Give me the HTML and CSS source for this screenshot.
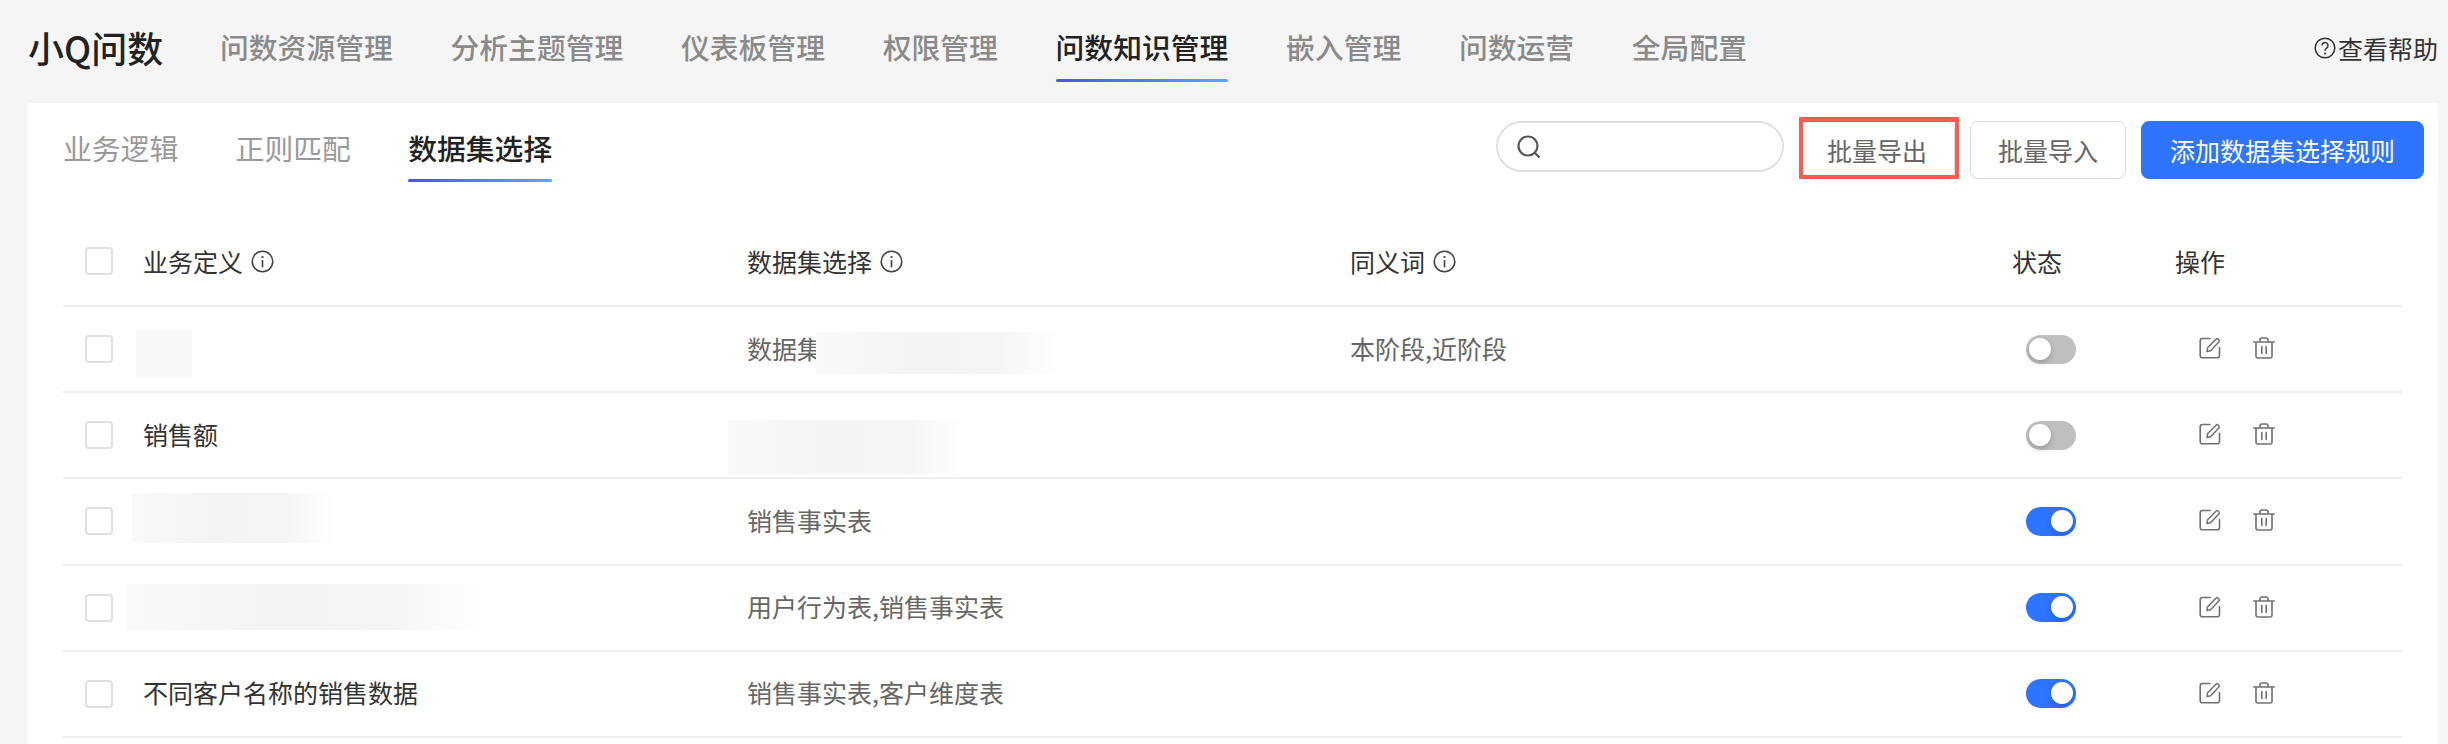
FILE: index.html
```html
<!DOCTYPE html>
<html lang="zh-CN">
<head>
<meta charset="utf-8">
<title>小Q问数</title>
<link rel="stylesheet" href="styles.css">
</head>
<body>
<svg class="defs" width="0" height="0" aria-hidden="true">
  <symbol id="i-info" viewBox="0 0 22 22"><circle cx="11" cy="11" r="9.8" fill="none" stroke="currentColor" stroke-width="1.5"/><circle cx="11" cy="6.8" r="1.1" fill="currentColor"/><path d="M11 9.6v7" fill="none" stroke="currentColor" stroke-width="1.6"/></symbol>
  <symbol id="i-edit" viewBox="0 0 22 22"><path d="M11 1.5H3.5a2.3 2.3 0 0 0-2.3 2.3v14.7a2.3 2.3 0 0 0 2.3 2.3h14.7a2.3 2.3 0 0 0 2.3-2.3V10.5" fill="none" stroke="currentColor" stroke-width="1.6" stroke-linecap="round"/><path d="M8 14.5l.6-3.8L17.2 2c.6-.6 1.2-.6 1.8 0l1 1c.6.6.6 1.200 0 1.800l-8.400 8.900z" fill="none" stroke="currentColor" stroke-width="1.5" stroke-linejoin="round"/></symbol>
  <symbol id="i-trash" viewBox="0 0 22 22"><path d="M.8 5h20.400M7 5V2.800A1.800 1.800 0 0 1 8.800 1h4.400A1.800 1.800 0 0 1 15 2.800V5M3 5v14.200A1.800 1.800 0 0 0 4.800 21h12.400a1.800 1.800 0 0 0 1.800-1.800V5M8.800 9.500v7M13.200 9.500v7" fill="none" stroke="currentColor" stroke-width="1.600" stroke-linecap="round"/></symbol>
</svg>
<header class="topbar">
  <div class="brand">小Q问数</div>
  <nav class="nav">
    <a class="nav-item">问数资源管理</a>
    <a class="nav-item">分析主题管理</a>
    <a class="nav-item">仪表板管理</a>
    <a class="nav-item">权限管理</a>
    <a class="nav-item active">问数知识管理</a>
    <a class="nav-item">嵌入管理</a>
    <a class="nav-item">问数运营</a>
    <a class="nav-item">全局配置</a>
  </nav>
  <a class="help">
    <svg class="help-icon" viewBox="0 0 22 22"><circle cx="11" cy="11" r="9.8" fill="none" stroke="currentColor" stroke-width="1.5"/><path d="M8 8.6a3 3 0 1 1 4.6 2.5c-1 .7-1.6 1.2-1.6 2.6" fill="none" stroke="currentColor" stroke-width="1.5"/><circle cx="11" cy="16.4" r="1" fill="currentColor"/></svg>
    <span>查看帮助</span>
  </a>
</header>
<main class="panel">
  <div class="toolbar">
    <div class="tabs">
      <a class="tab">业务逻辑</a>
      <a class="tab">正则匹配</a>
      <a class="tab active">数据集选择</a>
    </div>
    <div class="actions">
      <div class="search">
        <svg class="search-icon" viewBox="0 0 24 24"><circle cx="11" cy="11" r="9.5" fill="none" stroke="currentColor" stroke-width="2.2"/><path d="M18 18l4.5 4.5" fill="none" stroke="currentColor" stroke-width="2.2"/></svg>
      </div>
      <button class="btn btn-marked">批量导出</button>
      <button class="btn">批量导入</button>
      <button class="btn btn-primary">添加数据集选择规则</button>
    </div>
  </div>
  <div class="table">
    <div class="row head">
      <div class="cell cell-check"><span class="check"></span></div>
      <div class="cell">业务定义<svg class="info"><use href="#i-info"/></svg></div>
      <div class="cell">数据集选择<svg class="info"><use href="#i-info"/></svg></div>
      <div class="cell">同义词<svg class="info"><use href="#i-info"/></svg></div>
      <div class="cell">状态</div>
      <div class="cell">操作</div>
    </div>
    <div class="row">
      <div class="cell cell-check"><span class="check"></span></div>
      <div class="cell name"><span class="mask mask-a"></span></div>
      <div class="cell sub">数据集<span class="mask mask-b"></span></div>
      <div class="cell sub">本阶段,近阶段</div>
      <div class="cell state"><span class="switch"></span></div>
      <div class="cell ops"><svg class="op"><use href="#i-edit"/></svg><svg class="op"><use href="#i-trash"/></svg></div>
    </div>
    <div class="row">
      <div class="cell cell-check"><span class="check"></span></div>
      <div class="cell name">销售额</div>
      <div class="cell sub"><span class="mask mask-c"></span></div>
      <div class="cell sub"></div>
      <div class="cell state"><span class="switch"></span></div>
      <div class="cell ops"><svg class="op"><use href="#i-edit"/></svg><svg class="op"><use href="#i-trash"/></svg></div>
    </div>
    <div class="row">
      <div class="cell cell-check"><span class="check"></span></div>
      <div class="cell name"><span class="mask mask-d"></span></div>
      <div class="cell sub">销售事实表</div>
      <div class="cell sub"></div>
      <div class="cell state"><span class="switch on"></span></div>
      <div class="cell ops"><svg class="op"><use href="#i-edit"/></svg><svg class="op"><use href="#i-trash"/></svg></div>
    </div>
    <div class="row">
      <div class="cell cell-check"><span class="check"></span></div>
      <div class="cell name"><span class="mask mask-e"></span></div>
      <div class="cell sub">用户行为表,销售事实表</div>
      <div class="cell sub"></div>
      <div class="cell state"><span class="switch on"></span></div>
      <div class="cell ops"><svg class="op"><use href="#i-edit"/></svg><svg class="op"><use href="#i-trash"/></svg></div>
    </div>
    <div class="row">
      <div class="cell cell-check"><span class="check"></span></div>
      <div class="cell name">不同客户名称的销售数据</div>
      <div class="cell sub">销售事实表,客户维度表</div>
      <div class="cell sub"></div>
      <div class="cell state"><span class="switch on"></span></div>
      <div class="cell ops"><svg class="op"><use href="#i-edit"/></svg><svg class="op"><use href="#i-trash"/></svg></div>
    </div>
  </div>
</main>
</body>
</html>
```
FILE: styles.css
```css
* { box-sizing: border-box; }
html, body { margin: 0; height: 744px; overflow: hidden; }
body {
  background: #f5f5f5;
  font-family: "Noto Sans CJK SC", "Liberation Sans", sans-serif;
  display: flex;
  flex-direction: column;
}
.defs { position: absolute; }
.topbar {
  height: 103px;
  display: flex;
  align-items: flex-start;
  padding: 0 10px 0 28px;
  flex: none;
}
.brand {
  font-size: 36px;
  font-weight: 500;
  color: #222;
  line-height: 40px;
  margin-top: 27px;
  width: 192px;
  flex: none;
}
.nav { display: flex; gap: 57.7px; flex: 1; }
.nav-item {
  font-size: 28.8px;
  font-weight: 500;
  line-height: 40px;
  padding-top: 27px;
  height: 82px;
  color: #8a8a8a;
  position: relative;
}
.nav-item.active { color: #222; }
.nav-item.active::after,
.tab.active::after {
  content: "";
  position: absolute;
  left: 0;
  right: 0;
  bottom: 0;
  height: 3px;
  border-radius: 2px;
  background: linear-gradient(90deg, #5050f5, #5aa8ff);
}
.help {
  display: flex;
  align-items: center;
  gap: 2px;
  margin-top: 28px;
  height: 40px;
  font-size: 25px;
  color: #333;
}
.help-icon { width: 22px; height: 22px; }
.panel {
  flex: 1;
  margin: 0 10px 0 27px;
  background: #fff;
  padding: 0 0 0 36px;
}
.toolbar {
  display: flex;
  justify-content: space-between;
  align-items: flex-start;
  padding-right: 14px;
}
.tabs { display: flex; gap: 57.4px; padding-top: 25px; }
.tab {
  font-size: 28.8px;
  line-height: 40px;
  color: #999;
  height: 54px;
  position: relative;
}
.tab.active { color: #222; font-weight: 500; }
.actions { display: flex; padding-top: 18px; align-items: flex-start; gap: 15px; }
.search {
  width: 288px;
  height: 51px;
  border: 2px solid #e0e0e0;
  border-radius: 26px;
  display: flex;
  align-items: center;
  padding-left: 19px;
  color: #555;
}
.search-icon { width: 24px; height: 24px; }
.btn {
  height: 58px;
  padding: 0;
  width: 156px;
  border: 1px solid #dcdcdc;
  border-radius: 8px;
  background: #fff;
  color: #666;
  font: 400 25px "Noto Sans CJK SC", sans-serif;
}
.btn-marked { position: relative; }
.btn-marked::after {
  content: "";
  position: absolute;
  left: -1px;
  right: -5px;
  top: -5px;
  bottom: -1px;
  border: 4px solid #ff5a4f;
  border-top-width: 5px;
}
.btn-primary {
  width: 283px;
  background: #2f74ff;
  border-color: #2f74ff;
  color: #fff;
}
.table { margin-right: 36px; }
.row {
  display: grid;
  grid-template-columns: 80px 604px 603px 662px 163px 1fr;
  height: 86.2px;
  border-bottom: 2px solid #efefef;
  align-items: center;
  font-size: 25px;
  color: #333;
}
.row.head { height: 125px; padding-top: 35px; }
.cell { position: relative; display: flex; align-items: center; height: 40px; white-space: nowrap; }
.cell-check { padding-left: 22px; }
.name, .sub { padding-bottom: 3px; }
.check {
  width: 28px;
  height: 28px;
  border: 2px solid #e0e0e0;
  border-radius: 4px;
  background: #fff;
}
.sub { color: #666; }
.info { width: 23px; height: 23px; margin-left: 8px; color: #444; }
.state { padding-left: 14px; }
.switch {
  width: 50px;
  height: 29px;
  border-radius: 15px;
  background: #bfbfbf;
  position: relative;
}
.switch::after {
  content: "";
  position: absolute;
  left: 3px;
  top: 3px;
  width: 22px;
  height: 22px;
  border-radius: 50%;
  background: #fff;
  box-shadow: 0 3px 6px rgba(0,0,0,.2);
}
.switch.on { background: #2f74ff; }
.switch.on::after { left: 25px; }
.ops { gap: 32px; padding-left: 24px; padding-bottom: 2px; }
.op { width: 22px; height: 22px; color: #707070; }
.mask {
  position: absolute;
  display: block;
  background: linear-gradient(90deg, #f9f9f9, #f4f4f4 40%, #f5f5f5 75%, #fcfcfc 93%, #fff 100%);
}
.mask-a { left: -7px; top: 1px; width: 56px; height: 48px; background: #f8f8f8; }
.mask-b { left: 69px; top: 3px; width: 245px; height: 42px; }
.mask-c { left: -19px; top: 5px; width: 238px; height: 54px; }
.mask-d { left: -11px; top: -8px; width: 203px; height: 50px; }
.mask-e { left: -17px; top: -4px; width: 356px; height: 46px; }
```
